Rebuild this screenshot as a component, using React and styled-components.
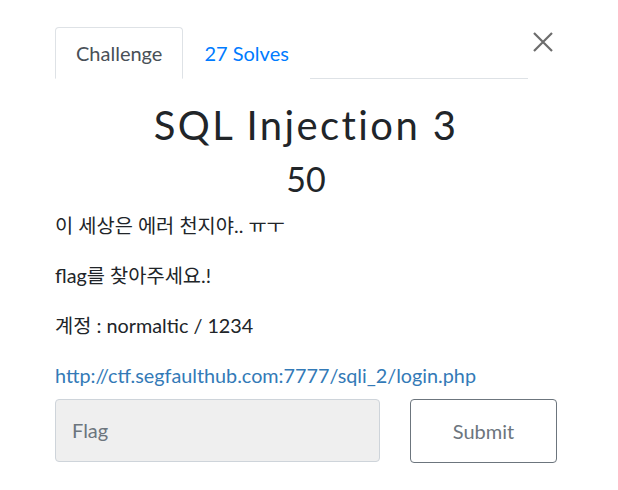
import styled, { createGlobalStyle } from "styled-components";

const GlobalStyle = createGlobalStyle`
  html, body {
    margin: 0;
    padding: 0;
    background: #ffffff;
  }
  body {
    font-family: "Lato", "Noto Sans CJK KR", sans-serif;
    color: #212529;
    font-size: 20px;
  }
`;

const Modal = styled.div`
  width: 618px;
  height: 490px;
  box-sizing: border-box;
  padding: 27px 61px 0 55px;
  background: #ffffff;
`;

const Header = styled.div`
  display: flex;
  align-items: flex-start;
`;

const Tabs = styled.div`
  flex: 1;
  display: flex;
  border-bottom: 1px solid #dee2e6;
`;

const Tab = styled.div`
  padding: 0 20px;
  height: 50px;
  line-height: 51px;
  font-size: 20px;
  margin-bottom: -1px;
  color: ${(p) => (p.active ? "#495057" : "#007bff")};
  background: #fff;
  border: 1px solid ${(p) => (p.active ? "#dee2e6" : "transparent")};
  border-bottom-color: ${(p) => (p.active ? "#fff" : "transparent")};
  border-radius: 4px 4px 0 0;
`;

const CloseButton = styled.div`
  width: 29px;
  padding: 5px 0 0 5px;
  box-sizing: border-box;
  display: flex;
`;

const Title = styled.h2`
  margin: 22px 0 0;
  text-align: center;
  font-size: 40px;
  font-weight: 400;
  letter-spacing: 2.4px;
  line-height: 1.2;
  color: #212529;
`;

const Points = styled.h3`
  margin: 10px 0 0;
  text-align: center;
  font-size: 34px;
  font-weight: 400;
  line-height: 1.2;
`;

const Description = styled.div`
  margin-top: 12px;
`;

const Paragraph = styled.p`
  margin: 0 0 24px;
  line-height: 26px;
  font-size: 19.8px;
`;

const Link = styled.a`
  color: #337ab7;
  text-decoration: none;
`;

const SubmitRow = styled.div`
  display: flex;
  align-items: stretch;
  margin-top: -13px;
`;

const FlagInput = styled.div`
  width: 325px;
  height: 63px;
  box-sizing: border-box;
  background: #efefef;
  border: 1px solid #ced4da;
  border-radius: 4px;
  padding: 0 16px;
  display: flex;
  align-items: center;
  font-size: 20px;
  color: #6c757d;
`;

const SubmitButton = styled.div`
  margin-left: auto;
  width: 147px;
  height: 64px;
  box-sizing: border-box;
  border: 1px solid #6c757d;
  border-radius: 4px;
  display: flex;
  align-items: center;
  justify-content: center;
  font-size: 20px;
  color: #6c757d;
`;

export default function App() {
  return (
    <>
      <GlobalStyle />
      <Modal>
        <Header>
          <Tabs>
            <Tab active>Challenge</Tab>
            <Tab>27 Solves</Tab>
          </Tabs>
          <CloseButton>
            <svg width="20" height="20" viewBox="0 0 20 20">
              <path d="M1 1L19 19M19 1L1 19" stroke="#6c6c6c" strokeWidth="2.2" fill="none" />
            </svg>
          </CloseButton>
        </Header>
        <Title>SQL Injection 3</Title>
        <Points>50</Points>
        <Description>
          <Paragraph>이 세상은 에러 천지야.. ㅠㅜ</Paragraph>
          <Paragraph>flag를 찾아주세요.!</Paragraph>
          <Paragraph>계정 : normaltic / 1234</Paragraph>
          <Paragraph>
            <Link href="#">http://ctf.segfaulthub.com:7777/sqli_2/login.php</Link>
          </Paragraph>
        </Description>
        <SubmitRow>
          <FlagInput>Flag</FlagInput>
          <SubmitButton>Submit</SubmitButton>
        </SubmitRow>
      </Modal>
    </>
  );
}
